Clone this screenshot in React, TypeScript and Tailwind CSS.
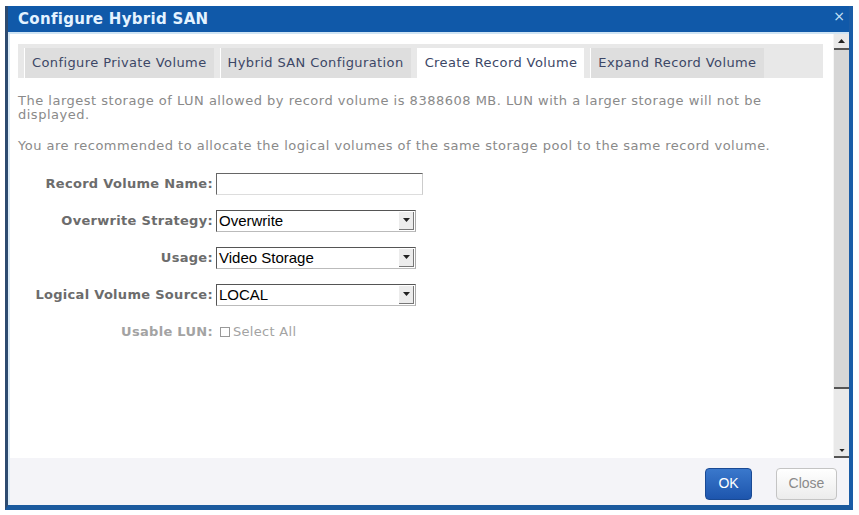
import React from 'react'

const tabs = ['Configure Private Volume', 'Hybrid SAN Configuration', 'Create Record Volume', 'Expand Record Volume']

const SelectBox = ({ value }: { value: string }) => (
  <div className="w-[200px] h-[22px] flex items-center border border-[#555] border-r-[#aaa] border-b-[#bbb] bg-white">
    <span className="flex-1 pl-[2px] text-[15px] leading-none text-black font-['Liberation_Sans',Arial,sans-serif]">{value}</span>
    <div className="w-[15px] h-[18px] mr-[1px] flex items-center justify-center bg-[#ececec] border-r border-b border-[#777]">
      <svg width="7" height="4" viewBox="0 0 7 4"><path d="M0 0h7L3.5 4z" fill="#222" /></svg>
    </div>
  </div>
)

const Row = ({ label, children, dim }: { label: string; children: React.ReactNode; dim?: boolean }) => (
  <div className="flex items-center h-[37px]">
    <div className={`w-[195px] text-right font-bold text-[13px] tracking-[0.3px] ${dim ? 'text-[#a3a3a3]' : 'text-[#6c6c6c]'}`}>{label}</div>
    <div className="ml-[3px]">{children}</div>
  </div>
)

const App = () => {
  return (
    <div className="w-[859px] h-[515px] bg-white pt-[6px] pl-[5px] font-['DejaVu_Sans',Verdana,sans-serif]">
      <div className="w-[848px] h-[504px] flex flex-col border-l-[3px] border-l-[#2d4b70] border-r-[4px] border-r-[#1a5ca6] border-b-[5px] border-b-[#1b5a9e] bg-white">
        {/* title bar */}
        <div className="h-[26px] bg-[#1059a9] flex items-center justify-between pl-[10px] pr-[4px]">
          <span className="text-[15px] font-bold text-[#e4f3ff] tracking-[0.3px]">Configure Hybrid SAN</span>
          <span className="text-[14px] leading-none text-[#c9e2f7] -mt-[6px]">×</span>
        </div>
        <div className="h-[2px] bg-[#cfe4f4]" />

        <div className="flex-1 flex border-l-2 border-l-[#dcecf8]">
          {/* scrollable body */}
          <div className="flex-1 pt-[10px] pl-[8px] pr-[10px]">
            <div className="h-[34px] bg-[#e8e8e8] flex items-end pl-[6px] gap-[6px]">
              {tabs.map((t, i) => (
                <div
                  key={t}
                  className={`h-[30px] flex items-center px-[7px] text-[13px] tracking-[0.4px] text-[#3c4766] border-l border-white ${i === 2 ? 'bg-white' : 'bg-[#dedede]'}`}
                >
                  {t}
                </div>
              ))}
            </div>

            <p className="mt-[16px] pr-[40px] text-[13px] tracking-[0.5px] leading-[14px] text-[#8a8a8a]">
              The largest storage of LUN allowed by record volume is 8388608 MB. LUN with a larger storage will not be displayed.
            </p>
            <p className="mt-[17px] text-[13px] tracking-[0.5px] leading-[14px] text-[#8a8a8a] whitespace-nowrap">
              You are recommended to allocate the logical volumes of the same storage pool to the same record volume.
            </p>

            <div className="mt-[12px]">
              <Row label="Record Volume Name:">
                <div className="w-[207px] h-[22px] border border-[#666] border-r-[#ccc] border-b-[#ddd] bg-white" />
              </Row>
              <Row label="Overwrite Strategy:">
                <SelectBox value="Overwrite" />
              </Row>
              <Row label="Usage:">
                <SelectBox value="Video Storage" />
              </Row>
              <Row label="Logical Volume Source:">
                <SelectBox value="LOCAL" />
              </Row>
              <Row label="Usable LUN:" dim>
                <div className="flex items-center gap-[3px] ml-[4px] text-[13px] tracking-[0.3px] text-[#a3a3a3]">
                  <span className="w-[10px] h-[10px] border border-[#999] bg-white" />
                  Select All
                </div>
              </Row>
            </div>
          </div>

          {/* scrollbar */}
          <div className="w-[16px] flex flex-col bg-[#e9e9e9] border-l border-[#f5f5f5]">
            <div className="h-[14px] flex items-center justify-center">
              <svg width="7" height="4" viewBox="0 0 7 4"><path d="M3.5 0L7 4H0z" fill="#222" /></svg>
            </div>
            <div className="h-[341px] bg-[#d6d6d6] border-t-2 border-b-2 border-[#555]" />
            <div className="flex-1" />
            <div className="h-[14px] flex items-center justify-center border-b-2 border-[#555]">
              <svg width="6" height="3" viewBox="0 0 7 4"><path d="M0 0h7L3.5 4z" fill="#222" /></svg>
            </div>
          </div>
        </div>

        {/* footer buttons */}
        <div className="h-[47px] pt-[4px] bg-[#f4f4f8] border-l-2 border-l-[#dcecf8] flex items-center justify-end gap-[24px] pr-[12px]">
          <button className="w-[47px] h-[32px] rounded-[4px] bg-gradient-to-b from-[#3a78cc] to-[#1d55ad] border border-[#1a4a94] text-white text-[14px] font-['Liberation_Sans',Arial,sans-serif]">
            OK
          </button>
          <button className="w-[61px] h-[32px] rounded-[4px] bg-gradient-to-b from-white to-[#ececec] border border-[#c4c4c4] text-[#8a8a8a] text-[14px] font-['Liberation_Sans',Arial,sans-serif]">
            Close
          </button>
        </div>
      </div>
    </div>
  )
}

export default App
